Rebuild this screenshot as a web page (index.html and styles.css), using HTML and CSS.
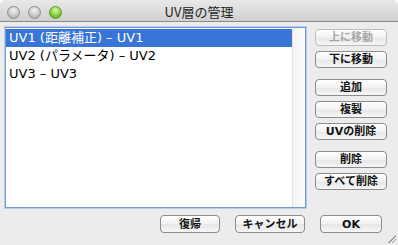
FILE: index.html
```html
<!DOCTYPE html>
<html lang="ja">
<head>
    <meta charset="UTF-8">
    <meta name="viewport" content="width=device-width, initial-scale=1.0">
    <title>UV層の管理</title>
    <link rel="stylesheet" href="styles.css">
</head>
<body>

    <div class="window">
        <!-- Title bar -->
        <div class="titlebar">
            <div class="lights">
                <span class="light"></span>
                <span class="light"></span>
                <span class="light green"></span>
            </div>
            <div class="title">UV層の管理</div>
        </div>

        <!-- Main area: list + side buttons -->
        <div class="content">
            <div class="list">
                <div class="rows">
                    <div class="row selected">UV1 (距離補正) – UV1</div>
                    <div class="row">UV2 (パラメータ) – UV2</div>
                    <div class="row">UV3 – UV3</div>
                </div>
                <div class="track"></div>
            </div>

            <div class="side">
                <div class="group">
                    <button class="btn" disabled>上に移動</button>
                    <button class="btn">下に移動</button>
                </div>
                <div class="group">
                    <button class="btn">追加</button>
                    <button class="btn">複製</button>
                    <button class="btn">UVの削除</button>
                </div>
                <div class="group">
                    <button class="btn">削除</button>
                    <button class="btn">すべて削除</button>
                </div>
            </div>
        </div>

        <!-- Footer buttons -->
        <div class="footer">
            <button class="btn revert">復帰</button>
            <button class="btn cancel">キャンセル</button>
            <button class="btn ok">OK</button>
        </div>

        <div class="grip"></div>
    </div>

</body>
</html>
```

FILE: styles.css
```css
body {
    margin: 0;
    padding: 0;
    background-color: #ffffff;
    font-family: "DejaVu Sans", "Noto Sans CJK JP", sans-serif;
}

.window {
    position: relative;
    width: 398px;
    height: 245px;
    background-color: #ececec;
    border-radius: 5px 5px 0 0;
    overflow: hidden;
}

/* Title bar */
.titlebar {
    position: relative;
    height: 21px;
    background: linear-gradient(#e9e9e9, #d0d0d0);
    border-bottom: 1px solid #8a8a8a;
    display: flex;
    align-items: center;
    justify-content: center;
}

.lights {
    position: absolute;
    left: 7px;
    top: 6px;
    display: flex;
    gap: 8px;
}

.light {
    width: 11px;
    height: 11px;
    border-radius: 50%;
    border: 1px solid #8e8e8e;
    background: radial-gradient(circle at 50% 30%, #f4f4f4, #c4c4c4 60%, #9d9d9d);
}

.light.green {
    border-color: #5c9a2a;
    background: radial-gradient(circle at 50% 30%, #d9f7a8, #86cc3c 55%, #4f9a16);
}

.title {
    font-family: "Noto Sans CJK JP", sans-serif;
    font-size: 13px;
    color: #262626;
    padding-top: 1px;
}

/* Main area */
.content {
    display: flex;
    padding: 5px 11px 0 5px;
    gap: 9px;
}

.list {
    width: 299px;
    height: 179px;
    border: 1px solid #6e9bd3;
    box-shadow: 0 0 0 1px #b7cde9;
    background-color: #fff;
    display: flex;
}

.rows {
    flex: 1;
    padding-top: 1px;
}

.row {
    height: 18px;
    line-height: 18px;
    padding-left: 3px;
    font-size: 13px;
    color: #000;
}

.row.selected {
    background-color: #3875d7;
    color: #fff;
}

.track {
    width: 12px;
    border-left: 1px solid #e4e4e4;
    background: linear-gradient(90deg, #f3f3f3, #fbfbfb);
}

.side {
    display: flex;
    flex-direction: column;
    gap: 11px;
    padding-top: 2px;
}

.group {
    display: flex;
    flex-direction: column;
    gap: 5px;
}

/* Buttons */
.btn {
    width: 72px;
    height: 17px;
    padding: 0;
    border: 1px solid #8c8c8c;
    border-radius: 4px;
    background: linear-gradient(#ffffff, #f1f1f1 50%, #e6e6e6 51%, #f6f6f6);
    font-family: "DejaVu Sans", "Noto Sans CJK JP", sans-serif;
    font-size: 11px;
    font-weight: bold;
    color: #111;
    line-height: 15px;
}

.btn:disabled {
    color: #a6a6a6;
    border-color: #bdbdbd;
}

.footer {
    display: flex;
    justify-content: flex-end;
    gap: 15px;
    padding: 7px 16px 0 0;
}

.footer .btn {
    height: 18px;
}

.btn.revert {
    width: 60px;
}

.btn.cancel {
    width: 70px;
}

.btn.ok {
    width: 62px;
}

.grip {
    position: absolute;
    right: 2px;
    bottom: 2px;
    width: 9px;
    height: 9px;
    background: linear-gradient(135deg, transparent 55%, #9a9a9a 55%, #9a9a9a 62%, transparent 62%, transparent 75%, #9a9a9a 75%, #9a9a9a 82%, transparent 82%);
}
```
